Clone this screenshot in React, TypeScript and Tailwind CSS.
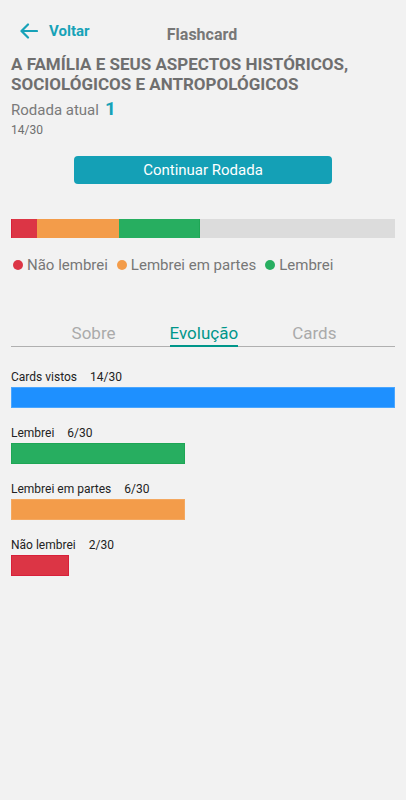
import React from "react";

const stats = [
  { label: "Cards vistos", value: "14/30", width: 384, cls: "bg-[#1e90ff] border-[#4aa6ff]" },
  { label: "Lembrei", value: "6/30", width: 174, cls: "bg-[#27ae60] border-[#1ea655]" },
  { label: "Lembrei em partes", value: "6/30", width: 174, cls: "bg-[#f39c4a] border-[#f4a860]" },
  { label: "Não lembrei", value: "2/30", width: 58, cls: "bg-[#dc3545] border-[#d8203a]" },
];

export default function App() {
  return (
    <div
      className="w-[406px] h-[800px] bg-[#f2f2f2] overflow-hidden"
      style={{ fontFamily: "Roboto, 'Noto Sans', sans-serif" }}
    >
      {/* Header */}
      <div className="relative flex items-center h-6 mt-[19px] px-5">
        <div className="flex items-center gap-[11px] text-[#17a2b8]">
          <svg width="18" height="16" viewBox="0 0 18 16" fill="none" stroke="currentColor" strokeWidth="2.2" strokeLinecap="round" strokeLinejoin="round">
            <path d="M17 8H2" />
            <path d="M8 1.5L1.5 8L8 14.5" />
          </svg>
          <span className="text-[15px] font-bold leading-6">Voltar</span>
        </div>
        <div className="absolute left-0 right-0 top-[4px] flex justify-center pointer-events-none">
          <span className="text-[16px] font-bold text-[#777] leading-6 ml-[-2px]">Flashcard</span>
        </div>
      </div>

      <div className="px-[11px]">
        <div className="mt-[11px] text-[17px] font-bold leading-5 text-[#6f6f6f]">
          A FAMÍLIA E SEUS ASPECTOS HISTÓRICOS, SOCIOLÓGICOS E ANTROPOLÓGICOS
        </div>
        <div className="mt-[5px] flex items-baseline h-5 leading-5">
          <span className="text-[15px] text-[#7a7a7a]">Rodada atual</span>
          <span className="ml-[6px] text-[19px] font-bold text-[#17a2b8]">1</span>
        </div>
        <div className="mt-[3px] text-[12px] leading-4 text-[#6f6f6f]">14/30</div>

        <button className="mt-[18px] mx-auto flex items-center justify-center w-[258px] h-[28px] rounded-[4px] bg-[#14a0b6] text-white text-[15px]">
          Continuar Rodada
        </button>

        <div className="mt-[35px] flex h-[19px] w-[384px] bg-[#dcdcdc]">
          <div className="w-[26px] bg-[#dc3545] border-l border-[#d8203a]" />
          <div className="w-[82px] bg-[#f39c4a]" />
          <div className="w-[81px] bg-[#27ae60] border-r border-[#1ea655]" />
        </div>

        <div className="mt-[17px] flex items-center h-5 text-[15px] text-[#777] ml-[2px]">
          <span className="w-[10px] h-[10px] rounded-full bg-[#dc3545] mr-[4px]" />
          <span>Não lembrei</span>
          <span className="w-[10px] h-[10px] rounded-full bg-[#f39c4a] ml-[9px] mr-[4px]" />
          <span>Lembrei em partes</span>
          <span className="w-[10px] h-[10px] rounded-full bg-[#27ae60] ml-[9px] mr-[4px]" />
          <span>Lembrei</span>
        </div>

        {/* Tabs */}
        <div className="mt-[48px] flex justify-center gap-[54px] border-b border-[#b0b0b0] pl-[2px]">
          <div className="text-[17px] leading-5 pb-[2px] border-b-2 border-transparent -mb-px text-[#aaaaaa]">Sobre</div>
          <div className="text-[17px] leading-5 pb-[2px] border-b-2 border-[#00968a] -mb-px text-[#00968a]">Evolução</div>
          <div className="text-[17px] leading-5 pb-[2px] border-b-2 border-transparent -mb-px text-[#aaaaaa]">Cards</div>
        </div>

        {/* Stats */}
        <div className="mt-[22px] flex flex-col gap-[17px]">
          {stats.map((s) => (
            <div key={s.label}>
              <div className="text-[12px] leading-4 text-[#222]">
                {s.label}
                <span className="ml-[13px]">{s.value}</span>
              </div>
              <div className={`mt-[2px] h-[21px] border ${s.cls}`} style={{ width: s.width }} />
            </div>
          ))}
        </div>
      </div>
    </div>
  );
}
